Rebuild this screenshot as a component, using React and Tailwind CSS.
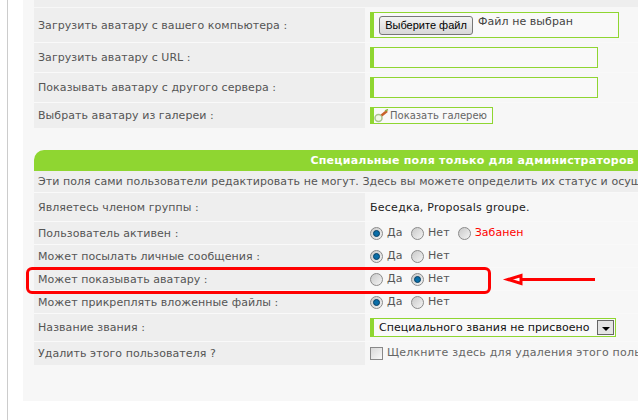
const Radio = ({ checked }) => (
    <span className="flex items-center justify-center w-[13px] h-[13px] rounded-full border border-[#8a8a8a] bg-gradient-to-br from-[#c9c9c9] to-[#f4f4f4] shrink-0">
        {checked && <span className="w-[7px] h-[7px] rounded-full bg-[#0a6ea8] border border-[#073f63]" />}
    </span>
);

const Choice = ({ checked, label, className = "", labelClass = "text-[#555]" }) => (
    <span className={`flex items-center gap-[4px] ${className}`}>
        <Radio checked={checked} />
        <span className={`${labelClass} -mt-[1px]`}>{label}</span>
    </span>
);

const Row = ({ label, h, children, pt = "" }) => (
    <div className={`flex border-b border-[#f9f9f9] ${h}`}>
        <div className="w-[331px] shrink-0 bg-[#eeeeee] flex items-center pl-[4px] text-[#555]">{label}</div>
        <div className={`flex-1 pl-[5px] flex items-center ${pt}`}>{children}</div>
    </div>
);

const TextInput = () => (
    <div className="w-[228px] h-[21px] bg-[#f9f9f9] border border-[#8fd631] border-l-[4px]" />
);

const YesNo = ({ yes }) => (
    <div className="flex items-center">
        <Choice checked={yes} label="Да" className="w-[41px]" />
        <Choice checked={!yes} label="Нет" />
    </div>
);

const App = () => (
    <div className="relative w-[638px] h-[420px] overflow-hidden bg-white text-[11px] leading-[13px] tracking-[0.06px] whitespace-nowrap font-['DejaVu_Sans',sans-serif]">
        <div className="absolute left-[7px] top-0 bottom-0 w-px bg-[#cccccc]" />
        <div className="ml-[23px] h-[401px] bg-[#f7f7f7] pl-[11px]">
            <div className="h-[8px] -ml-[11px] pl-[11px]">
                <div className="h-[7px] bg-[#eeeeee]" />
            </div>
            <Row label="Загрузить аватару с вашего компьютера :" h="h-[35px]">
                <div className="w-[249px] h-[26px] bg-[#f9f9f9] border border-[#8fd631] border-l-[4px] flex pl-[5px] pt-[3px] gap-[5px]">
                    <div className="w-[94px] h-[19px] rounded-[3px] border border-[#777] bg-gradient-to-b from-[#f4f4f4] to-[#d8d8d8] flex items-center justify-center text-[11px] tracking-normal text-black font-['Liberation_Sans',sans-serif]">
                        Выберите файл
                    </div>
                    <span className="text-[#444] -mt-[1px]">Файл не выбран</span>
                </div>
            </Row>
            <Row label="Загрузить аватару с URL :" h="h-[30px]">
                <TextInput />
            </Row>
            <Row label="Показывать аватару с другого сервера :" h="h-[30px]">
                <TextInput />
            </Row>
            <div className="flex h-[25px]">
                <div className="w-[331px] shrink-0 bg-[#eeeeee] flex items-center pl-[4px] text-[#555]">Выбрать аватару из галереи :</div>
                <div className="flex-1 pl-[5px] flex items-center">
                    <div className="w-[123px] h-[17px] bg-[#f9f9f9] border border-[#8fd631] border-l-[4px] flex items-center text-[10px] tracking-normal text-[#666]">
                        <svg width="16" height="14" viewBox="0 0 16 14" className="shrink-0">
                            <circle cx="4.5" cy="9" r="3.5" fill="#f2f7ea" stroke="#a9c48d" strokeWidth="1.5" />
                            <path d="M7.5 6.5 L13 2" stroke="#c8612a" strokeWidth="2.5" />
                            <path d="M11 2 L14 0.5" stroke="#8fb04c" strokeWidth="1.5" />
                        </svg>
                        <span>Показать галерею</span>
                    </div>
                </div>
            </div>

            <div className="h-[21px] mt-[22px] bg-[#8fd631] rounded-tl-[10px] flex items-center justify-end pr-[4px] text-white font-bold tracking-[0.25px]">
                Специальные поля только для администраторов
            </div>
            <div className="h-[22px] bg-[#eeeeee] border-b border-[#f9f9f9] flex items-center pl-[4px] text-[#555] overflow-hidden">
                Эти поля сами пользователи редактировать не могут. Здесь вы можете определить их статус и осуществлять
            </div>
            <Row label="Являетесь членом группы :" h="h-[29px]">
                <span className="text-[#222] tracking-[0.25px]">Беседка, Proposals groupe.</span>
            </Row>
            <Row label="Пользователь активен :" h="h-[23px]">
                <YesNo yes />
                <Choice label="Забанен" className="ml-[8px]" labelClass="text-[#f00]" />
            </Row>
            <Row label="Может посылать личные сообщения :" h="h-[23px]">
                <YesNo yes />
            </Row>
            <Row label="Может показывать аватару :" h="h-[23px]">
                <YesNo yes={false} />
            </Row>
            <Row label="Может прикреплять вложенные файлы :" h="h-[23px]">
                <YesNo yes />
            </Row>
            <Row label="Название звания :" h="h-[28px]">
                <div className="w-[246px] h-[19px] bg-[#f9f9f9] border border-[#8fd631] border-l-[4px] flex items-center justify-between pl-[5px] pr-[1px] text-[#111]">
                    <span>Специального звания не присвоено</span>
                    <span className="flex items-center justify-center w-[17px] h-[15px] border border-[#666] bg-[#e4e4e4] pt-[3px]">
                        <span className="border-x-[4px] border-t-[4px] border-x-transparent border-t-black" />
                    </span>
                </div>
            </Row>
            <div className="flex h-[23px]">
                <div className="w-[331px] shrink-0 bg-[#eeeeee] flex items-center pl-[4px] text-[#555]">Удалить этого пользователя ?</div>
                <div className="flex-1 pl-[5px] flex items-center gap-[4px] overflow-hidden text-[#666]">
                    <span className="w-[13px] h-[13px] border border-[#888] bg-gradient-to-br from-[#d8d8d8] to-[#f8f8f8] shrink-0" />
                    <span className="-mt-[3px] tracking-[0.2px]">Щелкните здесь для удаления этого пользователя</span>
                </div>
            </div>
        </div>

        {/* red annotation on top of the screenshot */}
        <div className="absolute left-[26px] top-[267px] w-[465px] h-[27px] border-[3px] border-[#f00] rounded-[6px]" />
        <svg className="absolute left-[500px] top-[268px]" width="100" height="24" viewBox="0 0 100 24">
            <path d="M95 11.5 H20" stroke="#f00" strokeWidth="3" />
            <path d="M8 11.5 L21 7.5 V15.5 Z" fill="#fff" stroke="#f00" strokeWidth="3" />
        </svg>
    </div>
);

export default App;
